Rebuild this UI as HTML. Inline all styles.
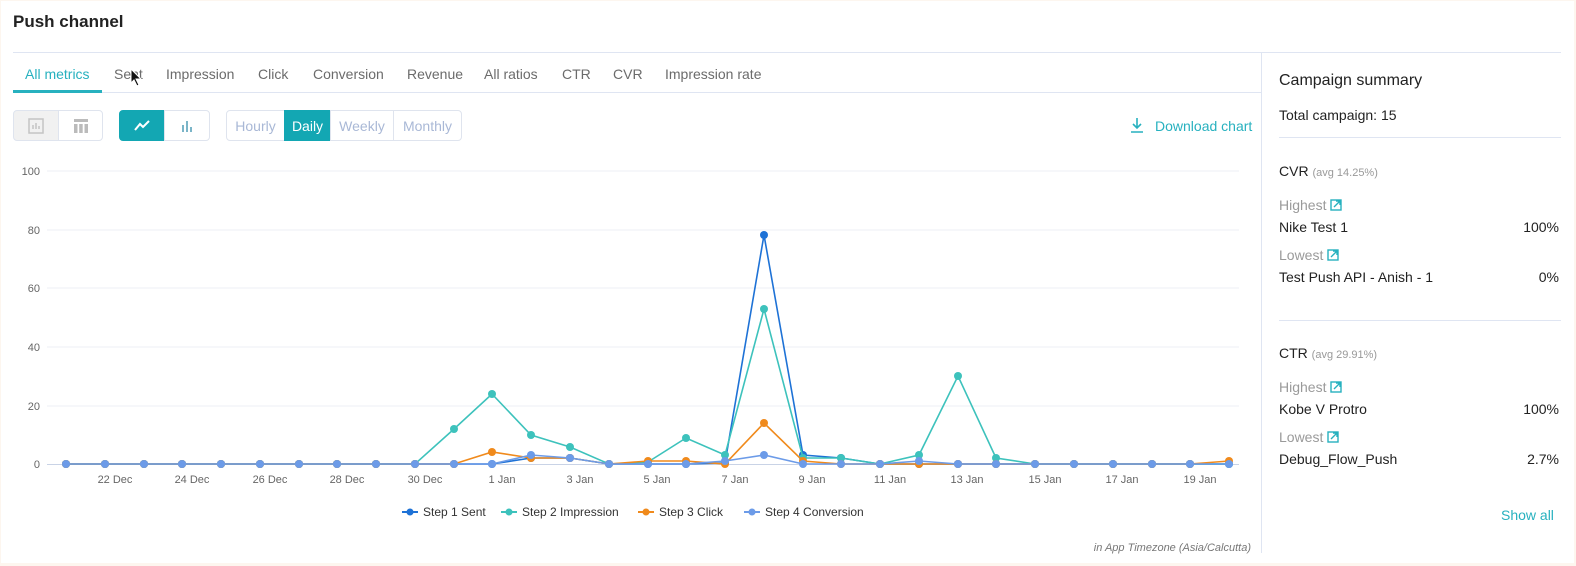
<!DOCTYPE html>
<html><head><meta charset="utf-8"><style>
*{margin:0;padding:0;box-sizing:border-box}
body{width:1576px;height:566px;background:#fdf6ef;font-family:"Liberation Sans",sans-serif;position:relative;overflow:hidden}
.page{position:absolute;left:1px;top:1px;width:1573px;height:562px;background:#fff}
.abs{position:absolute;white-space:nowrap}
.tab{position:absolute;top:65px;font-size:14px;color:#6b6b6b}
.btn{position:absolute;top:109px;height:31px;border:1px solid #dfe4ee;font-size:14px;color:#a9b8d6;display:flex;align-items:center;justify-content:center}
.r{font-size:14px;color:#222}
.g{font-size:14px;color:#9a9a9a}
.ext{display:inline-block;vertical-align:-1px;margin-left:4px}
</style></head><body><div class="page">
<div class="abs" style="left:12px;top:11px;font-size:17px;font-weight:bold;color:#222">Push channel</div>
<div class="abs" style="left:12px;top:51px;width:1548px;height:1px;background:#dfe5f2"></div>
<div class="abs" style="left:1260px;top:52px;width:1px;height:500px;background:#dfe5f2"></div>
<div class="abs" style="left:12px;top:91px;width:1248px;height:1px;background:#dfe5f2"></div>
<div class="abs" style="left:12px;top:89px;width:89px;height:3px;background:#27b1bf"></div>
<div class="tab" style="left:24px;color:#27b1bf">All metrics</div>
<div class="tab" style="left:113px">Sent</div>
<div class="tab" style="left:165px">Impression</div>
<div class="tab" style="left:257px">Click</div>
<div class="tab" style="left:312px">Conversion</div>
<div class="tab" style="left:406px">Revenue</div>
<div class="tab" style="left:483px">All ratios</div>
<div class="tab" style="left:561px">CTR</div>
<div class="tab" style="left:612px">CVR</div>
<div class="tab" style="left:664px">Impression rate</div>
<svg class="abs" style="left:129px;top:67px" width="14" height="20"><path d="M1 1 L1 15 L4 12 L7 18 L9 17 L6 11 L11 11 Z" fill="#111" stroke="#fff" stroke-width="1"/></svg>

<div class="btn" style="left:12px;width:46px;background:#f1f1f1;border-radius:4px 0 0 4px"><svg width="16" height="16"><rect x="1" y="1" width="14" height="14" fill="none" stroke="#c4c4c4" stroke-width="1.5"/><path d="M5 11V7M8 11V5M11 11V8" stroke="#c4c4c4" stroke-width="1.5"/></svg></div>
<div class="btn" style="left:57px;width:45px;border-radius:0 4px 4px 0"><svg width="16" height="16"><rect x="1" y="1" width="14" height="3" fill="#bbb"/><rect x="1" y="6" width="3.5" height="9" fill="#bbb"/><rect x="6.2" y="6" width="3.5" height="9" fill="#bbb"/><rect x="11.5" y="6" width="3.5" height="9" fill="#bbb"/></svg></div>
<div class="btn" style="left:118px;width:46px;background:#13a7b3;border-color:#13a7b3;border-radius:4px 0 0 4px"><svg width="16" height="12"><path d="M1 10L6 4L9 7L15 1" fill="none" stroke="#fff" stroke-width="2"/></svg></div>
<div class="btn" style="left:163px;width:46px;border-radius:0 4px 4px 0"><svg width="12" height="12"><path d="M2 12V5M6 12V1M10 12V7" stroke="#7bb5c8" stroke-width="2"/></svg></div>
<div class="btn" style="left:225px;width:59px;border-radius:4px 0 0 4px">Hourly</div>
<div class="btn" style="left:283px;width:47px;background:#13a7b3;border-color:#13a7b3;color:#fff">Daily</div>
<div class="btn" style="left:329px;width:64px">Weekly</div>
<div class="btn" style="left:392px;width:69px;border-radius:0 4px 4px 0">Monthly</div>
<svg class="abs" style="left:1129px;top:116px" width="14" height="16"><path d="M7 1V11M3 7L7 11L11 7M1 15H13" fill="none" stroke="#27b1bf" stroke-width="1.6"/></svg>
<div class="abs" style="left:1154px;top:117px;font-size:14px;color:#27b1bf">Download chart</div>

<svg class="abs" style="left:0;top:0" width="1260" height="560">
<defs>
<marker id="m1" markerUnits="userSpaceOnUse" markerWidth="10" markerHeight="10" refX="5" refY="5"><circle cx="5" cy="5" r="4" fill="#1e72d6"/></marker>
<marker id="m2" markerUnits="userSpaceOnUse" markerWidth="10" markerHeight="10" refX="5" refY="5"><circle cx="5" cy="5" r="4" fill="#3dc2bc"/></marker>
<marker id="m3" markerUnits="userSpaceOnUse" markerWidth="10" markerHeight="10" refX="5" refY="5"><circle cx="5" cy="5" r="4" fill="#f08a1c"/></marker>
<marker id="m4" markerUnits="userSpaceOnUse" markerWidth="10" markerHeight="10" refX="5" refY="5"><circle cx="5" cy="5" r="4" fill="#6c9be8"/></marker>
</defs>
<g stroke="#eceff4" stroke-width="1">
<line x1="46" y1="170" x2="1238" y2="170"/><line x1="46" y1="229" x2="1238" y2="229"/><line x1="46" y1="287" x2="1238" y2="287"/><line x1="46" y1="346" x2="1238" y2="346"/><line x1="46" y1="405" x2="1238" y2="405"/>
</g>
<line x1="46" y1="463.5" x2="1238" y2="463.5" stroke="#c9d3e6"/>
<g font-size="11" fill="#666" text-anchor="end">
<text x="39" y="174">100</text><text x="39" y="233">80</text><text x="39" y="291">60</text><text x="39" y="350">40</text><text x="39" y="409">20</text><text x="39" y="467">0</text>
</g>
<g font-size="11" fill="#666" text-anchor="middle">
<text x="114" y="482">22 Dec</text><text x="191" y="482">24 Dec</text><text x="269" y="482">26 Dec</text><text x="346" y="482">28 Dec</text><text x="424" y="482">30 Dec</text><text x="501" y="482">1 Jan</text><text x="579" y="482">3 Jan</text><text x="656" y="482">5 Jan</text><text x="734" y="482">7 Jan</text><text x="811" y="482">9 Jan</text><text x="889" y="482">11 Jan</text><text x="966" y="482">13 Jan</text><text x="1044" y="482">15 Jan</text><text x="1121" y="482">17 Jan</text><text x="1199" y="482">19 Jan</text>
</g>
<g fill="none" stroke-width="1.6">
<polyline stroke="#1e72d6" marker-start="url(#m1)" marker-mid="url(#m1)" marker-end="url(#m1)" points="65,463 104,463 143,463 181,463 220,463 259,463 298,463 336,463 375,463 414,463 453,463 491,463 530,457 569,457 608,463 647,463 685,463 724,462 763,234 802,454 840,457 879,463 918,463 957,463 995,463 1034,463 1073,463 1112,463 1151,463 1189,463 1228,463"/>
<polyline stroke="#3dc2bc" marker-start="url(#m2)" marker-mid="url(#m2)" marker-end="url(#m2)" points="65,463 104,463 143,463 181,463 220,463 259,463 298,463 336,463 375,463 414,463 453,428 491,393 530,434 569,446 608,463 647,461 685,437 724,454 763,308 802,457 840,457 879,463 918,454 957,375 995,457 1034,463 1073,463 1112,463 1151,463 1189,463 1228,463"/>
<polyline stroke="#f08a1c" marker-start="url(#m3)" marker-mid="url(#m3)" marker-end="url(#m3)" points="65,463 104,463 143,463 181,463 220,463 259,463 298,463 336,463 375,463 414,463 453,463 491,451 530,457 569,457 608,463 647,460 685,460 724,463 763,422 802,460 840,463 879,463 918,463 957,463 995,463 1034,463 1073,463 1112,463 1151,463 1189,463 1228,460"/>
<polyline stroke="#6c9be8" marker-start="url(#m4)" marker-mid="url(#m4)" marker-end="url(#m4)" points="65,463 104,463 143,463 181,463 220,463 259,463 298,463 336,463 375,463 414,463 453,463 491,463 530,454 569,457 608,463 647,463 685,463 724,460 763,454 802,463 840,463 879,463 918,460 957,463 995,463 1034,463 1073,463 1112,463 1151,463 1189,463 1228,463"/>
</g>
<g font-size="12" fill="#333">
<line x1="401" y1="511" x2="417" y2="511" stroke="#1e72d6" stroke-width="2"/><circle cx="409" cy="511" r="3.5" fill="#1e72d6"/><text x="422" y="515">Step 1 Sent</text>
<line x1="500" y1="511" x2="516" y2="511" stroke="#3dc2bc" stroke-width="2"/><circle cx="508" cy="511" r="3.5" fill="#3dc2bc"/><text x="521" y="515">Step 2 Impression</text>
<line x1="637" y1="511" x2="653" y2="511" stroke="#f08a1c" stroke-width="2"/><circle cx="645" cy="511" r="3.5" fill="#f08a1c"/><text x="658" y="515">Step 3 Click</text>
<line x1="743" y1="511" x2="759" y2="511" stroke="#6c9be8" stroke-width="2"/><circle cx="751" cy="511" r="3.5" fill="#6c9be8"/><text x="764" y="515">Step 4 Conversion</text>
</g>
<text x="1250" y="550" font-size="11" font-style="italic" fill="#777" text-anchor="end">in App Timezone (Asia/Calcutta)</text>
</svg>

<div class="abs" style="left:1278px;top:71px;font-size:16px;color:#222">Campaign summary</div>
<div class="abs r" style="left:1278px;top:106px">Total campaign: 15</div>
<div class="abs" style="left:1278px;top:136px;width:282px;height:1px;background:#dfe5f2"></div>
<div class="abs r" style="left:1278px;top:162px">CVR <span style="font-size:11px;color:#999">(avg 14.25%)</span></div>
<div class="abs g" style="left:1278px;top:196px">Highest<svg class="ext" width="12" height="12"><rect x="1" y="1" width="10" height="10" fill="none" stroke="#27b1bf" stroke-width="1.4"/><path d="M4 8L10 2M6 2H10V6" fill="none" stroke="#27b1bf" stroke-width="1.4"/></svg></div>
<div class="abs r" style="left:1278px;top:218px">Nike Test 1</div><div class="abs r" style="right:15px;top:218px">100%</div>
<div class="abs g" style="left:1278px;top:246px">Lowest<svg class="ext" width="12" height="12"><rect x="1" y="1" width="10" height="10" fill="none" stroke="#27b1bf" stroke-width="1.4"/><path d="M4 8L10 2M6 2H10V6" fill="none" stroke="#27b1bf" stroke-width="1.4"/></svg></div>
<div class="abs r" style="left:1278px;top:268px">Test Push API - Anish - 1</div><div class="abs r" style="right:15px;top:268px">0%</div>
<div class="abs" style="left:1278px;top:319px;width:282px;height:1px;background:#dfe5f2"></div>
<div class="abs r" style="left:1278px;top:344px">CTR <span style="font-size:11px;color:#999">(avg 29.91%)</span></div>
<div class="abs g" style="left:1278px;top:378px">Highest<svg class="ext" width="12" height="12"><rect x="1" y="1" width="10" height="10" fill="none" stroke="#27b1bf" stroke-width="1.4"/><path d="M4 8L10 2M6 2H10V6" fill="none" stroke="#27b1bf" stroke-width="1.4"/></svg></div>
<div class="abs r" style="left:1278px;top:400px">Kobe V Protro</div><div class="abs r" style="right:15px;top:400px">100%</div>
<div class="abs g" style="left:1278px;top:428px">Lowest<svg class="ext" width="12" height="12"><rect x="1" y="1" width="10" height="10" fill="none" stroke="#27b1bf" stroke-width="1.4"/><path d="M4 8L10 2M6 2H10V6" fill="none" stroke="#27b1bf" stroke-width="1.4"/></svg></div>
<div class="abs r" style="left:1278px;top:450px">Debug_Flow_Push</div><div class="abs r" style="right:15px;top:450px">2.7%</div>
<div class="abs" style="left:1500px;top:506px;font-size:14px;color:#27b1bf">Show all</div>
</div></body></html>
